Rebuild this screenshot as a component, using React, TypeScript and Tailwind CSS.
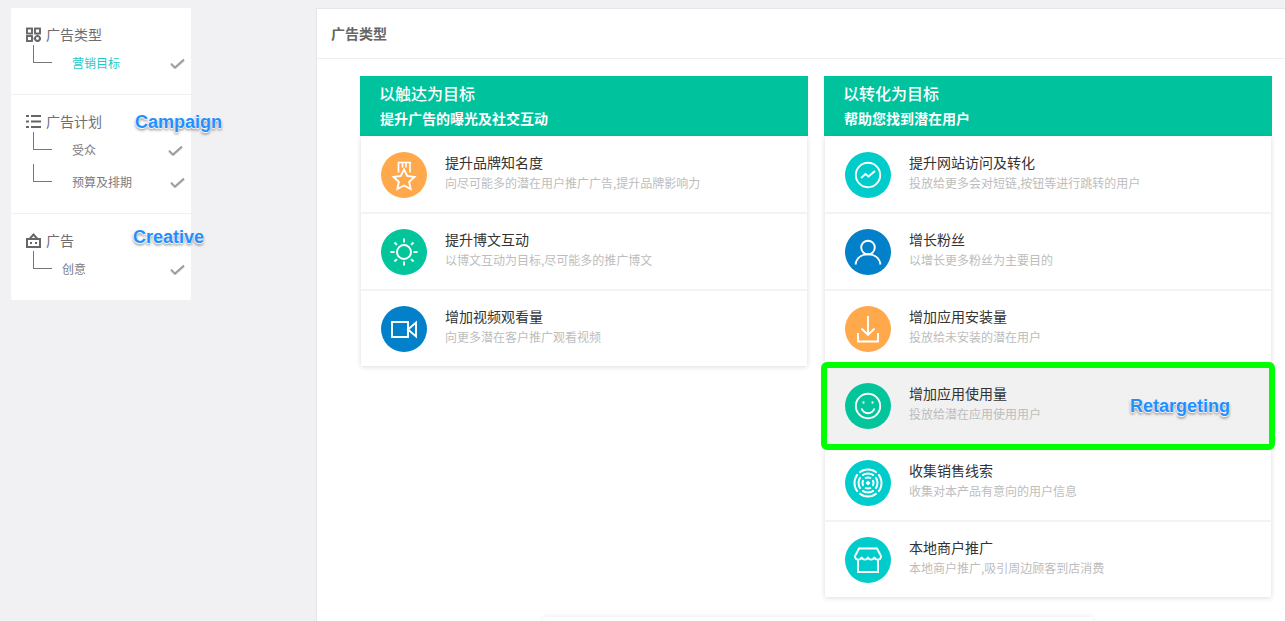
import React from "react";

const FONT = "font-['Noto_Sans_CJK_SC','Liberation_Sans',sans-serif]";

const Medal = () => (
  <>
    <path d="M17.5 20.5V10.5H29V20.5M21.5 10.5V15.5M25 10.5V15.5" strokeWidth="1.7" />
    <path d="M23 17.5L26.2 24L33.5 25L28.2 29.8L29.6 37L23 33.5L16.4 37L17.8 29.8L12.5 25L19.8 24Z" />
  </>
);
const Sun = () => (
  <>
    <circle cx="23" cy="23" r="7" />
    <path d="M23 9.5v4M23 32.5v4M9.5 23h4M32.5 23h4M13.5 13.5l2.4 2.4M30.1 30.1l2.4 2.4M32.5 13.5l-2.4 2.4M15.9 30.1l-2.4 2.4" />
  </>
);
const Video = () => (
  <>
    <rect x="11" y="16" width="16" height="15" />
    <path d="M27 23.5l8-7v14z" />
  </>
);
const Chart = () => (
  <>
    <circle cx="23" cy="23" r="12.2" />
    <path d="M16 26l4.5-4 3 2.5 6.5-5.5" />
  </>
);
const User = () => (
  <>
    <circle cx="23" cy="18.5" r="6.8" />
    <path d="M10.5 35.5C11.5 29 16.5 25.3 23 25.3S34.5 29 35.5 35.5" />
  </>
);
const Download = () => (
  <>
    <path d="M23 10v19M16.5 22.5L23 29l6.5-6.5" />
    <path d="M13 27v8.5h20V27" />
  </>
);
const Smile = () => (
  <>
    <circle cx="23" cy="23" r="12.2" />
    <path d="M16.5 25.5c1.3 3.2 3.6 4.7 6.5 4.7s5.2-1.5 6.5-4.7" />
    <path d="M18.5 18.5v2M27.5 18.5v2" />
  </>
);
const Target = () => (
  <>
    <circle cx="23" cy="23" r="13.5" strokeWidth="2" />
    <circle cx="23" cy="23" r="9.5" strokeWidth="2" />
    <circle cx="23" cy="23" r="5.5" strokeWidth="2" />
    <path d="M11 11l24 24M35 11L11 35" stroke="#00cccc" strokeWidth="2.4" />
    <path d="M23 20.5l2.5 2.5-2.5 2.5-2.5-2.5z" stroke="none" fill="#fff" />
  </>
);
const Shop = () => (
  <>
    <path d="M14 11.5h18l4 7.5c0 2.6-1.7 3.6-3.3 3.6s-3-1-3.4-2.6c-.4 1.6-1.8 2.6-3.3 2.6s-2.6-1-3-2.6c-.4 1.6-1.5 2.6-3 2.6s-2.9-1-3.3-2.6c-.4 1.6-1.8 2.6-3.4 2.6S10 21.6 10 19z" />
    <path d="M13 22.5V35h20V22.5" />
  </>
);

type Row = { t: string; s: string; c: string; I: React.FC; sel?: boolean };

const left: Row[] = [
  { t: "提升品牌知名度", s: "向尽可能多的潜在用户推广广告,提升品牌影响力", c: "bg-[#ffa84c]", I: Medal },
  { t: "提升博文互动", s: "以博文互动为目标,尽可能多的推广博文", c: "bg-[#03c59b]", I: Sun },
  { t: "增加视频观看量", s: "向更多潜在客户推广观看视频", c: "bg-[#0280c9]", I: Video },
];
const right: Row[] = [
  { t: "提升网站访问及转化", s: "投放给更多会对短链,按钮等进行跳转的用户", c: "bg-[#00cccc]", I: Chart },
  { t: "增长粉丝", s: "以增长更多粉丝为主要目的", c: "bg-[#0280c9]", I: User },
  { t: "增加应用安装量", s: "投放给未安装的潜在用户", c: "bg-[#ffa84c]", I: Download },
  { t: "增加应用使用量", s: "投放给潜在应用使用用户", c: "bg-[#03c59b]", I: Smile, sel: true },
  { t: "收集销售线索", s: "收集对本产品有意向的用户信息", c: "bg-[#00cccc]", I: Target },
  { t: "本地商户推广", s: "本地商户推广,吸引周边顾客到店消费", c: "bg-[#00cccc]", I: Shop },
];

const Label = ({ text, cls }: { text: string; cls: string }) => (
  <span
    className={`absolute z-10 font-['Liberation_Sans',sans-serif] font-bold text-[18px] leading-[22px] text-[#1f8fff] [text-shadow:0_0_1px_#fff,0_0_2px_#fff,0_1px_1px_#fff,0_2px_3px_rgba(0,0,0,0.6)] ${cls}`}
  >
    {text}
  </span>
);

const Card = ({ r, first }: { r: Row; first: boolean }) => (
  <div
    className={`relative flex items-start pl-[20px] ${first ? "h-[76px] pt-[16px]" : "h-[75px] pt-[15px]"} ${
      r.sel ? "bg-[#f1f1f1]" : "bg-white"
    }`}
  >
    <span className={`h-[46px] w-[46px] shrink-0 rounded-full ${r.c}`}>
      <svg viewBox="0 0 46 46" className="h-[46px] w-[46px]" fill="none" stroke="#fff" strokeWidth="1.9">
        <r.I />
      </svg>
    </span>
    <div className="ml-[18px] flex flex-col">
      <span className="mt-[-1px] h-[22px] text-[14px] leading-[22px] text-[#333]">{r.t}</span>
      <span className="text-[12px] leading-[20px] text-[#bdbdbd]">{r.s}</span>
    </div>
    {r.sel && (
      <>
        <div className="absolute bottom-[-7px] left-[-4px] right-[-4px] top-[-6px] z-10 rounded-[6px] border-[6px] border-[#00ff00]" />
        <Label text="Retargeting" cls="left-[305px] top-[27px]" />
      </>
    )}
  </div>
);

const Column = ({ title, sub, rows }: { title: string; sub: string; rows: Row[] }) => (
  <div className="w-[448px]">
    <div className="flex h-[60px] flex-col bg-[#00c39e] pl-[20px] pt-[5px] text-white">
      <span className="ml-[-1px] text-[16px] font-medium leading-[24px]">{title}</span>
      <span className="mt-[1px] text-[14px] font-bold leading-[24px]">{sub}</span>
    </div>
    <div className="mx-px flex flex-col gap-[2px] bg-[#f3f3f3] shadow-[0_1px_5px_rgba(0,0,0,0.14)]">
      {rows.map((r, i) => (
        <Card key={r.t} r={r} first={i === 0} />
      ))}
    </div>
  </div>
);

const Check = () => (
  <svg viewBox="0 0 15 11" className="h-[11px] w-[15px]" fill="none">
    <path d="M1 5.5l4 4L14 1.5" stroke="#d0d0d0" strokeWidth="2.4" transform="translate(0 0.6)" />
    <path d="M1 5.5l4 4L14 1.5" stroke="#9c9c9c" strokeWidth="1.7" />
  </svg>
);

const Sub = ({ text, pl, active, nudge }: { text: string; pl: string; active?: boolean; nudge?: string }) => (
  <div className="flex h-[32px] items-center">
    <span className="ml-[22px] mt-[-2px] h-[18px] w-[19px] shrink-0 self-start border-b border-l border-[#777]" />
    <span className={`text-[12px] ${pl} ${active ? "text-[#1ccbc9]" : "text-[#7b7b7f]"}`}>{text}</span>
    <span className={`ml-auto ${nudge ?? "mr-[6px]"}`}>
      <Check />
    </span>
  </div>
);

const Head = ({ text, icon }: { text: string; icon: React.ReactNode }) => (
  <div className="flex h-[22px] items-center pl-[15px]">
    <svg viewBox="0 0 15 15" className="h-[15px] w-[15px] shrink-0" fill="none" stroke="#666" strokeWidth="1.9">
      {icon}
    </svg>
    <span className="ml-[5px] text-[14px] leading-[22px] text-[#6e6e72]">{text}</span>
  </div>
);

export default function App() {
  return (
    <div className={`flex h-[621px] overflow-hidden bg-[#f1f1f4] ${FONT}`}>
      <aside className="ml-[11px] mt-[8px] h-[292px] w-[180px] shrink-0 rounded-[2px] bg-white">
        <section className="relative h-[87px] border-b border-[#f1f1f3] pt-[15px]">
          <Head
            text="广告类型"
            icon={
              <>
                <rect x="1" y="1.5" width="5" height="5" />
                <rect x="9" y="1.5" width="5" height="5" />
                <rect x="1" y="9" width="5" height="5" />
                <circle cx="11.5" cy="11.5" r="2.4" />
                <path d="M11.5 7.6v1.5M11.5 13.9v1.1M7.6 11.5h1.5M13.9 11.5h1.1" />
              </>
            }
          />
          <div className="mt-[2px]">
            <Sub text="营销目标" pl="pl-[20px]" active />
          </div>
        </section>
        <section className="relative h-[119px] border-b border-[#f1f1f3] pt-[15px]">
          <Head
            text="广告计划"
            icon={
              <>
                <path d="M5 2h10M5 7.5h10M5 13h10" />
                <path d="M0 2h3M0 7.5h3M0 13h3" />
              </>
            }
          />
          <div className="mt-[2px]">
            <Sub text="受众" pl="pl-[20px]" nudge="mr-[8px]" />
            <Sub text="预算及排期" pl="pl-[20px]" />
          </div>
          <Label text="Campaign" cls="left-[124px] top-[16px]" />
        </section>
        <section className="relative h-[86px] pt-[15px]">
          <Head
            text="广告"
            icon={
              <>
                <rect x="1" y="6" width="13" height="8" strokeWidth="2" />
                <path d="M3.5 6L7.5 1.5L11.5 6" />
                <path d="M4 10h2M9 10h2" strokeWidth="2" />
              </>
            }
          />
          <div className="mt-[2px]">
            <Sub text="创意" pl="pl-[10px]" />
          </div>
          <Label text="Creative" cls="left-[122px] top-[12px]" />
        </section>
      </aside>
      <main className="ml-[125px] mt-[8px] flex-1 border-l border-t border-[#e6e6ea] bg-white">
        <div className="flex h-[50px] items-center border-b border-[#eeeeee] pl-[14px] text-[14px] font-bold text-[#666]">
          广告类型
        </div>
        <div className="flex gap-[16px] pl-[43px] pt-[17px]">
          <Column title="以触达为目标" sub="提升广告的曝光及社交互动" rows={left} />
          <Column title="以转化为目标" sub="帮助您找到潜在用户" rows={right} />
        </div>
        <div className="ml-[226px] mt-[20px] h-[40px] w-[550px] bg-white shadow-[0_0_5px_rgba(0,0,0,0.1)]" />
      </main>
    </div>
  );
}
